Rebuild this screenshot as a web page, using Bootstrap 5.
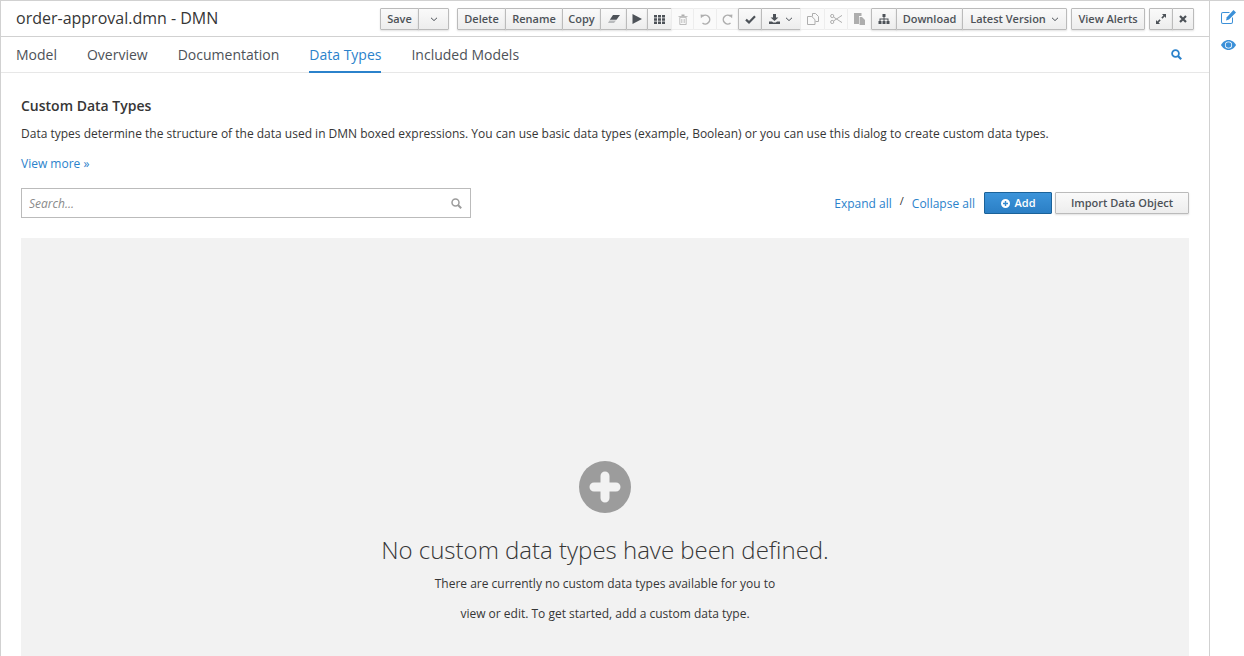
<!DOCTYPE html>
<html lang="en">
<head>
<meta charset="utf-8">
<title>order-approval.dmn - DMN</title>
<link href="https://cdn.jsdelivr.net/npm/bootstrap@5.3.0/dist/css/bootstrap.min.css" rel="stylesheet">
<style>
html,body{height:100%;overflow:hidden}
body{font-family:"Open Sans","Liberation Sans",sans-serif;font-size:12px;color:#363636;background:#fff}
.shell{height:656px;border-top:1px solid #d1d1d1;border-left:1px solid #d1d1d1}
.main-pane{width:1209px;min-width:1209px;border-right:1px solid #d1d1d1}
.side-pane{width:34px;padding-top:9px;gap:16px}
.title-bar{height:36px;flex:none;border-bottom:1px solid #d1d1d1;padding:7px 15px 0 15px}
.title-text{font-size:16px;line-height:20px;color:#363636;width:365px}
.tool-btn{height:22px;padding:0;border:1px solid #bbb;border-radius:1px;margin-left:-1px;font:600 11px/20px "Open Sans",sans-serif;color:#4d5258;background:linear-gradient(#fafafa,#ededed);box-shadow:0 1px 2px rgba(0,0,0,.12);display:inline-flex;align-items:center;justify-content:center;gap:5px;flex:none}
.tool-btn:disabled{opacity:1;color:#9c9c9c;background:#fafafa;border-color:#ededed;box-shadow:none}
.tool-btn svg{display:block;fill:currentColor}
.tool-btn:disabled svg{opacity:.8}
.tool-grp{display:flex;margin-left:9px}
.tool-grp.first{margin-left:0}
.tool-grp.tight{margin-left:5px}
.w22{width:22px}.w23{width:23px}.w24{width:24px}.w25{width:25px}.w26{width:26px}.w27{width:27px}
.w-save{width:39px}.w-caret{width:31px}.w-del{width:49px}.w-ren{width:58px}.w-copy{width:39px}
.w-dl{width:40px}.w-down{width:67px}.w-ver{width:105px}.w-alerts{width:74px}
.tab-bar{height:36px;flex:none;border-bottom:1px solid #e7e7e7;padding:0 15px;gap:30px}
.tab-link{font-size:14px;line-height:19px;color:#4d5258;text-decoration:none;padding:8px 0 6px;display:block;height:36px;border-bottom:2px solid transparent}
.tab-link.on{color:#2b82cb;border-bottom-color:#2b82cb}
.search-ic{margin-left:auto;margin-right:12px;margin-top:12px;color:#2b82cb}
.body-pane{padding:23px 20px 0 20px}
.sec-title{font-size:14px;font-weight:600;line-height:19px;margin:0 0 10px;color:#363636}
.sec-desc{font-size:12px;line-height:17px;margin:0 0 13px;color:#363636;white-space:nowrap}
.blue-link{color:#2b82cb;text-decoration:none;font-size:12px;line-height:17px}
.view-more{display:block;margin-bottom:16px}
.search-box{width:450px;height:30px;border:1px solid #bbb;padding:0 8px 0 7px}
.search-box input{border:0;outline:0;flex:1;font-size:12px;font-style:italic;padding:2px 0 0;color:#777;background:transparent}
.search-box input::placeholder{color:#8a8a8a;opacity:1}
.act-row{height:30px;margin-bottom:20px}
.act-link-group{font-size:12px;margin-right:9px}
.sep-slash{margin:0 8px 0 8px;position:relative;top:-2px;font-size:11px}
.add-btn{width:68px;height:22px;padding:0;border:1px solid #1b6299;border-radius:1px;background:linear-gradient(#3c94da,#2b7fc5);color:#fff;font:600 11px/20px "Open Sans",sans-serif;display:flex;align-items:center;justify-content:center;gap:5px}
.add-btn svg{fill:#fff}
.import-btn{width:134px;height:22px;margin-left:3px}
.empty-box{background:#f2f2f2;height:430px;width:1168px;padding-top:223px;text-align:center}
.empty-ic{display:block;margin:0 auto 20px}
.empty-title{font-size:24px;font-weight:300;line-height:33px;margin:0 0 9px;color:#363636}
.empty-line{font-size:12px;line-height:17px;margin:0 0 13px}
.side-ic{display:block;margin-left:11px;fill:#3b90d8}
</style>
</head>
<body>
<div class="shell d-flex">
  <div class="main-pane d-flex flex-column">
    <div class="title-bar d-flex align-items-start">
      <div class="title-text">order-approval.dmn - DMN</div>
      <div class="tool-grp first">
        <button class="tool-btn w-save" type="button">Save</button>
        <button class="tool-btn w-caret" type="button"><svg width="8" height="5" viewBox="0 0 8 5"><path d="M1 .8 4 3.600 7 .8" fill="none" stroke="#4d5258" stroke-width="1"/></svg></button>
      </div>
      <div class="tool-grp">
        <button class="tool-btn w-del" type="button">Delete</button>
        <button class="tool-btn w-ren" type="button">Rename</button>
        <button class="tool-btn w-copy" type="button">Copy</button>
        <button class="tool-btn w27" type="button" aria-label="Clear"><svg width="12" height="8" viewBox="0 0 12 8"><path d="M5 0H12L8.500 4.800H1.800z"/><path d="M1.400 5.400H8L6 8H0z" opacity=".35"/></svg></button>
        <button class="tool-btn w22" type="button" aria-label="Run"><svg width="10" height="10" viewBox="0 0 10 10"><path d="M.5 0 10 5 .5 10Z"/></svg></button>
        <button class="tool-btn w25" type="button" aria-label="Grid"><svg width="11" height="9" viewBox="0 0 11 9"><path d="M0 0h3v2.600H0zM4 0h3v2.600H4zM8 0h3v2.600H8zM0 3.200h3v2.600H0zM4 3.200h3v2.600H4zM8 3.200h3v2.600H8zM0 6.400h3V9H0zM4 6.400h3V9H4zM8 6.400h3V9H8z"/></svg></button>
        <button class="tool-btn w23" type="button" disabled aria-label="Delete"><svg width="10" height="11" viewBox="0 0 10 11"><path d="M3.500.5h3v1.400h3v.9H.5v-.9h3z"/><path d="M1.800 3.400h6.400V10.500H1.800zM3.800 5v4M6.200 5v4" fill="none" stroke="currentColor" stroke-width=".8"/></svg></button>
        <button class="tool-btn w24" type="button" disabled aria-label="Undo"><svg width="11" height="11" viewBox="0 0 11 11"><path d="M2.500 2.200A4.400 4.400 0 1 1 2.500 9" fill="none" stroke="currentColor" stroke-width="1.500"/><path d="M.6.400 4.500 1 .9 4.300Z"/></svg></button>
        <button class="tool-btn w23" type="button" disabled aria-label="Redo"><svg width="11" height="11" viewBox="0 0 11 11"><path d="M8.500 2.200A4.400 4.400 0 1 0 8.500 9" fill="none" stroke="currentColor" stroke-width="1.500"/><path d="M10.400.400 6.500 1l3.600 3.300Z"/></svg></button>
        <button class="tool-btn w24" type="button" aria-label="Validate"><svg width="11" height="9" viewBox="0 0 11 9"><path d="M1 4.600 4 7.400 10 1.300" fill="none" stroke="currentColor" stroke-width="2.200"/></svg></button>
        <button class="tool-btn w-dl" type="button" aria-label="Download options"><svg width="11" height="10" viewBox="0 0 11 10"><path d="M4 0h3v3.500h2.400L5.500 7 1.600 3.500H4zM0 7.500h3l1.200 1h2.600l1.200-1h3V10H0z"/></svg><svg width="8" height="5" viewBox="0 0 8 5"><path d="M1 .8 4 3.600 7 .8" fill="none" stroke="#4d5258" stroke-width="1"/></svg></button>
        <button class="tool-btn w25" type="button" disabled aria-label="Duplicate"><svg width="12" height="12" viewBox="0 0 12 12"><path d="M5.500.5h3L11.500 3.500V8.500H8.500M5.500.5V3.500" fill="none" stroke="currentColor"/><path d="M.5 3.500h4.300L8 6.700v4.800H.5z" fill="none" stroke="currentColor"/></svg></button>
        <button class="tool-btn w24" type="button" disabled aria-label="Cut"><svg width="12" height="10" viewBox="0 0 12 10"><circle cx="2.200" cy="2" r="1.600" fill="none" stroke="currentColor"/><circle cx="2.200" cy="8" r="1.600" fill="none" stroke="currentColor"/><path d="M3.500 3 12 8.600M3.500 7 12 1.400" stroke="currentColor" fill="none"/></svg></button>
        <button class="tool-btn w25" type="button" disabled aria-label="Paste"><svg width="11" height="12" viewBox="0 0 11 12"><path d="M0 0h7.500v3H5v8H0z"/><path d="M5.600 4H8l3 3v5H5.600z"/></svg></button>
        <button class="tool-btn w26" type="button" aria-label="Structure"><svg width="12" height="10" viewBox="0 0 12 10"><path d="M4.500 0h3v3h-1v1.500H10.500V7h1v3h-3V7h1V5.500h-3V7h1v3h-3V7h1V5.500h-3V7h1v3H.5V7h1V4.500H5.500V3h-1z"/></svg></button>
        <button class="tool-btn w-down" type="button">Download</button>
        <button class="tool-btn w-ver" type="button">Latest Version<svg width="8" height="5" viewBox="0 0 8 5"><path d="M1 .8 4 3.600 7 .8" fill="none" stroke="#4d5258" stroke-width="1"/></svg></button>
      </div>
      <div class="tool-grp tight"><button class="tool-btn w-alerts" type="button">View Alerts</button></div>
      <div class="tool-grp tight">
        <button class="tool-btn w24" type="button" aria-label="Maximize"><svg width="10" height="10" viewBox="0 0 10 10"><path d="M6 0h4v4L8.600 2.600 6.500 4.700 5.300 3.500 7.400 1.400zM0 10V6l1.400 1.400L3.500 5.300 4.700 6.500 2.600 8.600 4 10z"/></svg></button>
        <button class="tool-btn w22" type="button" aria-label="Close"><svg width="8" height="8" viewBox="0 0 8 8"><path d="M1 1l6 6M7 1 1 7" stroke="currentColor" stroke-width="2.200" fill="none"/></svg></button>
      </div>
    </div>
    <nav class="tab-bar d-flex align-items-start">
      <a class="tab-link" href="#">Model</a>
      <a class="tab-link" href="#">Overview</a>
      <a class="tab-link" href="#">Documentation</a>
      <a class="tab-link on" href="#">Data Types</a>
      <a class="tab-link" href="#">Included Models</a>
      <span class="search-ic"><svg width="11" height="11" viewBox="0 0 11 11" class="d-block"><circle cx="4.500" cy="4.500" r="3.400" fill="none" stroke="currentColor" stroke-width="1.800"/><path d="M7 7l3.200 3.200" stroke="currentColor" stroke-width="2.200"/></svg></span>
    </nav>
    <div class="body-pane">
      <h2 class="sec-title">Custom Data Types</h2>
      <p class="sec-desc">Data types determine the structure of the data used in DMN boxed expressions. You can use basic data types (example, Boolean) or you can use this dialog to create custom data types.</p>
      <a class="blue-link view-more" href="#">View more »</a>
      <div class="act-row d-flex align-items-center">
        <div class="search-box d-flex align-items-center">
          <input type="text" placeholder="Search...">
          <svg width="11" height="11" viewBox="0 0 11 11"><circle cx="4.500" cy="4.500" r="3.500" fill="none" stroke="#9c9c9c" stroke-width="1.500"/><path d="M7 7l3.200 3.200" stroke="#9c9c9c" stroke-width="2"/></svg>
        </div>
        <div class="act-link-group d-flex align-items-center ms-auto">
          <a class="blue-link" href="#">Expand all</a><span class="sep-slash">/</span><a class="blue-link" href="#">Collapse all</a>
        </div>
        <button class="add-btn" type="button"><svg width="9" height="9" viewBox="0 0 9 9"><path fill-rule="evenodd" d="M4.500 0a4.500 4.500 0 1 1 0 9 4.500 4.500 0 0 1 0-9zM3.800 2v1.800H2v1.400h1.800V7h1.400V5.200H7V3.800H5.200V2z"/></svg>Add</button>
        <button class="tool-btn import-btn" type="button">Import Data Object</button>
      </div>
      <div class="empty-box">
        <svg class="empty-ic" width="52" height="52" viewBox="0 0 52 52"><circle cx="26" cy="26" r="26" fill="#9c9c9c"/><path d="M26 15v22M15 26h22" stroke="#f2f2f2" stroke-width="9" stroke-linecap="round"/></svg>
        <h3 class="empty-title">No custom data types have been defined.</h3>
        <p class="empty-line">There are currently no custom data types available for you to</p>
        <p class="empty-line">view or edit. To get started, add a custom data type.</p>
      </div>
    </div>
  </div>
  <div class="side-pane d-flex flex-column">
    <svg class="side-ic" width="15" height="14" viewBox="0 0 15 14"><path fill-rule="evenodd" d="M2 2h7L8 3H2a1 1 0 0 0-1 1v8a1 1 0 0 0 1 1h8a1 1 0 0 0 1-1V8l1-1v5a2 2 0 0 1-2 2H2a2 2 0 0 1-2-2V4a2 2 0 0 1 2-2z"/><path d="M12.500 0 15 2.500 8 9.500 5 10.500 5.800 7.300z"/></svg>
    <svg class="side-ic" width="15" height="10" viewBox="0 0 15 10"><path d="M7.500 0C11 0 13.700 2.500 15 5c-1.300 2.500-4 5-7.500 5S1.300 7.500 0 5C1.300 2.500 4 0 7.500 0z"/><circle cx="7.500" cy="5" r="3.600" fill="#fff"/><circle cx="7.500" cy="5" r="2.800"/></svg>
  </div>
</div>
<script src="https://cdn.jsdelivr.net/npm/bootstrap@5.3.0/dist/js/bootstrap.bundle.min.js"></script>
</body>
</html>
